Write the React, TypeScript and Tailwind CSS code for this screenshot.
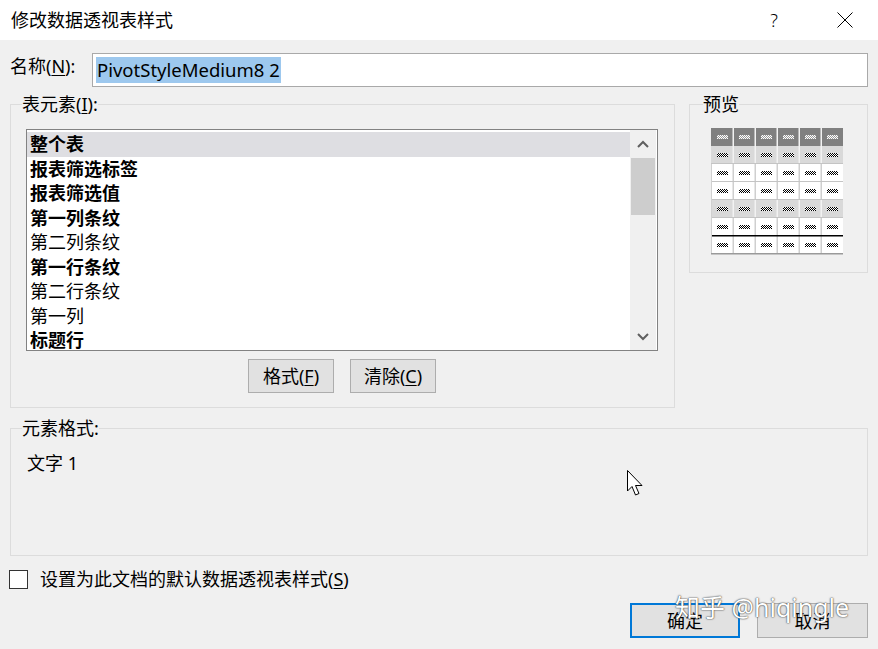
import React from "react";

type ListRow = { label: string; bold?: boolean; selected?: boolean };

const elements: ListRow[] = [
  { label: "整个表", bold: true, selected: true },
  { label: "报表筛选标签", bold: true },
  { label: "报表筛选值", bold: true },
  { label: "第一列条纹", bold: true },
  { label: "第二列条纹" },
  { label: "第一行条纹", bold: true },
  { label: "第二行条纹" },
  { label: "第一列" },
  { label: "标题行", bold: true },
];

// underlined access key, e.g. 名称(N)
function Key({ k }: { k: string }) {
  return (
    <>
      (<span className="underline underline-offset-2">{k}</span>)
    </>
  );
}

function Chevron({ down }: { down?: boolean }) {
  return (
    <svg width="12" height="8" viewBox="0 0 12 8">
      <polyline
        points={down ? "1,1 6,6 11,1" : "1,7 6,2 11,7"}
        fill="none"
        stroke="#606060"
        strokeWidth="2"
      />
    </svg>
  );
}

// mini table thumbnail in the preview box
function PreviewTable() {
  const cw = 22;
  const rh = 18;
  const fills = ["#808080", "#d9d9d9", "#ffffff", "#ffffff", "#d9d9d9", "#ffffff", "#ffffff"];
  return (
    <svg width="133" height="128" viewBox="0 0 133 128">
      <defs>
        <pattern id="chk-dark" width="2" height="2" patternUnits="userSpaceOnUse">
          <rect width="2" height="2" fill="#ffffff" />
          <rect width="1" height="1" fill="#000000" />
          <rect x="1" y="1" width="1" height="1" fill="#000000" />
        </pattern>
        <pattern id="chk-light" width="2" height="2" patternUnits="userSpaceOnUse">
          <rect width="2" height="2" fill="#9a9a9a" />
          <rect width="1" height="1" fill="#ffffff" />
          <rect x="1" y="1" width="1" height="1" fill="#ffffff" />
        </pattern>
      </defs>
      {fills.map((f, r) => (
        <rect key={"bg" + r} x="0" y={r * rh} width={cw * 6} height={rh} fill={f} />
      ))}
      {/* column rules */}
      {fills.map((f, r) =>
        [1, 2, 3, 4, 5].map((c) => (
          <rect
            key={"v" + r + c}
            x={c * cw - 0.5}
            y={r * rh}
            width="1.5"
            height={rh}
            fill={f === "#ffffff" ? "#cfcfcf" : "#f2f2f2"}
          />
        ))
      )}
      {/* row rules */}
      {[2, 3, 4, 5].map((r) => (
        <rect key={"h" + r} x="0" y={r * rh - 1} width={cw * 6} height="1" fill="#c4c4c4" />
      ))}
      <rect x="0" y={6 * rh - 1} width={cw * 6} height="1.5" fill="#000000" />
      <rect x="0" y={2 * rh} width="1" height={5 * rh} fill="#d0d0d0" />
      <rect x="0" y={7 * rh - 1} width={cw * 6} height="1.5" fill="#9a9a9a" />
      {/* cell text marks */}
      {fills.map((_, r) =>
        [0, 1, 2, 3, 4, 5].map((c) => (
          <rect
            key={"m" + r + c}
            x={c * cw + 6}
            y={r * rh + 7}
            width="11"
            height="4"
            fill={r === 0 ? "url(#chk-light)" : "url(#chk-dark)"}
          />
        ))
      )}
    </svg>
  );
}

export default function App() {
  return (
    <div className="relative w-[878px] h-[649px] overflow-hidden bg-[#f0f0f0] text-black text-[18px] leading-[22px] font-['Noto_Sans','Noto_Sans_CJK_SC',sans-serif]">
      {/* Title bar */}
      <div className="h-[40px] bg-white flex items-center pl-[11px]">
        <span className="flex-1">修改数据透视表样式</span>
        <span className="w-[20px] text-center font-light">?</span>
        <svg className="ml-[53px] mr-[25px]" width="16" height="16" viewBox="0 0 16 16">
          <path d="M0.5 0.5 L15.5 15.5 M15.5 0.5 L0.5 15.5" stroke="#000" strokeWidth="1" />
        </svg>
      </div>

      {/* Name */}
      <div className="mt-[13px] flex items-start px-[10px]">
        <label className="w-[82px] pt-[2px]">
          名称<Key k="N" />:
        </label>
        <div className="flex-1 h-[34px] border border-[#a9a9a9] bg-white flex items-center pl-[3px]">
          <span className="bg-[#9dc8ee] text-[18.5px] leading-[26px] px-[1px]">PivotStyleMedium8 2</span>
        </div>
      </div>

      {/* Table elements + preview */}
      <div className="mt-[7px] flex items-start gap-[14px] px-[10px]">
        <fieldset className="w-[665px] border border-[#dcdcdc] p-0 pb-[14px]">
          <legend className="ml-[11px] px-0 leading-[20px]">
            表元素<Key k="I" />:
          </legend>
          <div className="ml-[15px] w-[632px]">
            <div className="mt-[15px] h-[222px] border border-[#828282] bg-white flex">
              <div className="flex-1 overflow-hidden pt-[2px]">
                {elements.map((row) => (
                  <div
                    key={row.label}
                    className={`h-[24.5px] flex items-center pl-[3px] ${row.selected ? "bg-[#dedee2]" : ""} ${row.bold ? "font-bold" : ""}`}
                  >
                    {row.label}
                  </div>
                ))}
              </div>
              <div className="w-[26px] mr-[1px] bg-[#f0f0f0] flex flex-col">
                <div className="h-[27px] flex items-center justify-center">
                  <Chevron />
                </div>
                <div className="mx-[1px] mt-[1px] h-[57px] bg-[#cdcdcd]" />
                <div className="flex-1" />
                <div className="h-[26px] flex items-center justify-center">
                  <Chevron down />
                </div>
              </div>
            </div>
            <div className="mt-[8px] flex justify-center gap-[16px]">
              <button className="w-[86px] h-[34px] border border-[#adadad] bg-[#e1e1e1]">
                格式<Key k="F" />
              </button>
              <button className="w-[86px] h-[34px] border border-[#adadad] bg-[#e1e1e1]">
                清除<Key k="C" />
              </button>
            </div>
          </div>
        </fieldset>

        <fieldset className="w-[179px] border border-[#dcdcdc] p-0 pb-[16px]">
          <legend className="ml-[13px] px-0 leading-[20px]">预览</legend>
          <div className="mt-[14px] ml-[21px]">
            <PreviewTable />
          </div>
        </fieldset>
      </div>

      {/* Element format */}
      <fieldset className="mt-[10px] mx-[10px] h-[138px] border border-[#dcdcdc] p-0">
        <legend className="ml-[11px] px-0 leading-[20px]">元素格式:</legend>
        <div className="mt-[14px] pl-[16px]">文字 1</div>
      </fieldset>

      {/* Default checkbox */}
      <div className="mt-[12px] flex items-center pl-[9px]">
        <div className="w-[19px] h-[19px] border border-[#333] bg-white" />
        <span className="ml-[12px]">
          设置为此文档的默认数据透视表样式<Key k="S" />
        </span>
      </div>

      {/* Dialog buttons */}
      <div className="mt-[13px] flex justify-end gap-[17px] pr-[10px]">
        <button className="w-[110px] h-[35px] border-2 border-[#0078d7] bg-[#e1e1e1]">确定</button>
        <button className="w-[111px] h-[35px] border border-[#adadad] bg-[#e1e1e1]">取消</button>
      </div>

      {/* mouse pointer */}
      <svg className="absolute left-[627px] top-[470px]" width="20" height="28" viewBox="0 0 20 28">
        <path
          d="M0.5 0.5 L0.5 21 L5 16.5 L8.5 25 L12 23.5 L8.5 15.5 L15 15.5 Z"
          fill="#fff"
          stroke="#000"
          strokeWidth="1"
          strokeLinejoin="round"
        />
      </svg>

      {/* watermark */}
      <div className="absolute left-[675px] top-[592px] text-[25px] leading-[30px] text-white [text-shadow:0_0_1px_#333,0_0_2px_#555]">
        知乎 @hiqingle
      </div>
    </div>
  );
}
